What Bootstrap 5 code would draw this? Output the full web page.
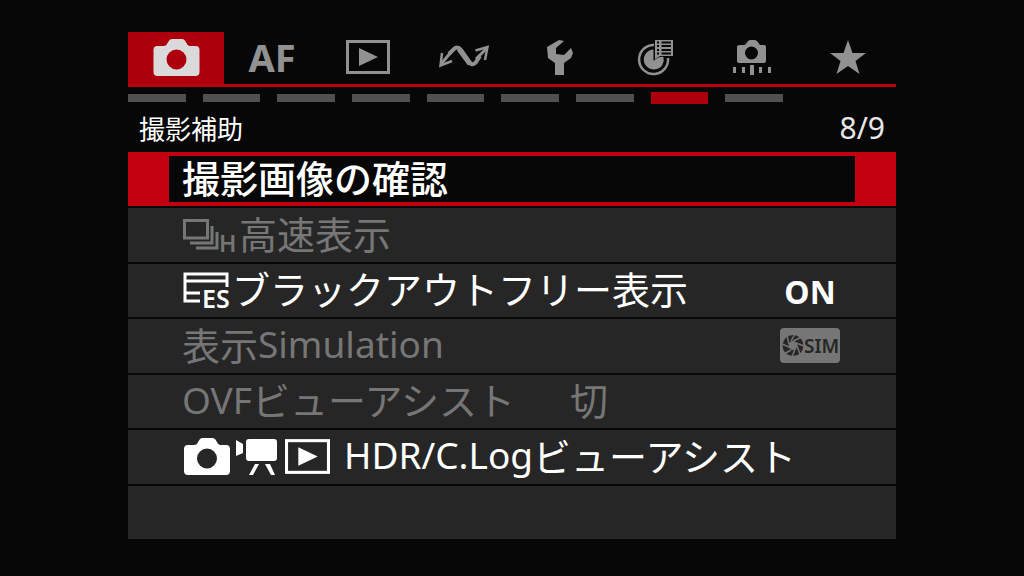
<!DOCTYPE html>
<html lang="ja">
<head>
<meta charset="utf-8">
<meta name="viewport" content="width=device-width, initial-scale=1">
<title>撮影補助</title>
<link href="https://cdn.jsdelivr.net/npm/bootstrap@5.3.0/dist/css/bootstrap.min.css" rel="stylesheet">
<style>
  body { background: #070707; color: #fff; font-family: "Noto Sans CJK JP", sans-serif; }
  .screen { width: 75%; padding: 32px 0 37px; }
  .latin { font-family: "Noto Sans", sans-serif; }
  .menu-tabs { height: 55px; border-bottom: 3px solid #bb0210; }
  .menu-tab { flex: 1 1 0; padding: 0 0 2px; background: transparent; color: #919191; line-height: 1; }
  .menu-tab.active { background: #ae000c; color: #dadada; }
  .tab-text { font-size: 38px; }
  .pages { height: 22px; gap: 17px; padding-right: 113px; }
  .page-bar { flex: 1 1 0; height: 8px; background: #505050; }
  .page-bar.active { height: 12px; background: #ae000c; }
  .heading { height: 43px; padding: 0 11px 6px; }
  .heading h1 { font-size: 26px; line-height: 1; font-weight: 400; }
  .page-count { font-size: 30px; line-height: 1; color: #e8e8e8; }
  .menu-row { flex: 1 1 0; min-height: 54px; padding: 0 41px; color: #fff; background: #262626;
    border: 0 solid #080808; font-size: 38px; line-height: 1; font-weight: 400; text-align: left; white-space: nowrap; }
  .menu-row + .menu-row { border-top-width: 2px; }
  .menu-row:disabled { color: #767676; }
  .menu-row.active { background: #c2000f; font-weight: 500; }
  .row-body { padding: 0 15px 4px 13px; }
  .menu-row.active .row-body { background: #070707; }
  .menu-row .latin { font-size: 37px; }
  .menu-row svg { margin-top: 4px; }
  .row-value { width: 60px; }
  .menu-row .row-value .latin { font-size: 32px; font-weight: 700; }
  .setting { margin-left: 55px; }
  svg { display: block; flex: none; overflow: visible; }
  svg text { font-family: "Noto Sans", sans-serif; }
</style>
</head>
<body>
<svg width="0" height="0" class="position-absolute" aria-hidden="true">
  <defs>
    <symbol id="camera" viewBox="0 0 46 37"><path fill="currentColor" fill-rule="evenodd" d="M4 7H10Q13 7 14 4L16 1Q17 0 19 0H28Q30 0 31 1L33 4Q34 7 36 7H42Q46 7 46 11V33Q46 37 42 37H4Q0 37 0 33V11Q0 7 4 7ZM23 10.500A10 10 0 1 0 23 30.500A10 10 0 1 0 23 10.500Z"/></symbol>
    <symbol id="play" viewBox="0 0 44 34"><rect x="1.500" y="1.500" width="41" height="31" fill="none" stroke="currentColor" stroke-width="3"/><path fill="currentColor" d="M13 8L32 17L13 26Z"/></symbol>
  </defs>
</svg>

<main class="screen mx-auto min-vh-100 d-flex flex-column">
  <nav class="menu-tabs d-flex" aria-label="メニュー">
    <button type="button" class="menu-tab active border-0 d-flex align-items-center justify-content-center" aria-label="撮影">
      <svg width="47" height="37"><use href="#camera"/></svg>
    </button>
    <button type="button" class="menu-tab border-0 d-flex align-items-center justify-content-center"><span class="latin tab-text fw-bold">AF</span></button>
    <button type="button" class="menu-tab border-0 d-flex align-items-center justify-content-center" aria-label="再生">
      <svg width="44" height="34"><use href="#play"/></svg>
    </button>
    <button type="button" class="menu-tab border-0 d-flex align-items-center justify-content-center" aria-label="通信">
      <svg width="50" height="24" viewBox="0 0 50 24" fill="none" stroke="currentColor">
        <path stroke-width="3" d="M2 19L13 6M37 14L48 3"/>
        <path stroke-width="4" d="M10 9L14 5Q18 0 22 5L31 18Q34 21 37 17L41 11"/>
        <path stroke-width="5" d="M20 4L31 19"/>
        <path stroke-width="2.500" d="M3 8L1.500 20.500L13 16M36.500 5.500L48.500 2L46 15"/>
      </svg>
    </button>
    <button type="button" class="menu-tab border-0 d-flex align-items-center justify-content-center" aria-label="設定">
      <svg width="26" height="35" viewBox="0 0 26 35"><path fill="currentColor" d="M12 0L17 1L9 8V14L17 15L24 8L26 13L24 18L17 23V35H8V23L1 18L0 7Z"/></svg>
    </button>
    <button type="button" class="menu-tab border-0 d-flex align-items-center justify-content-center" aria-label="カスタム機能">
      <svg width="36" height="35" viewBox="0 0 36 35">
        <path d="M16 5A14.500 14.500 0 1 0 30 18" fill="none" stroke="currentColor" stroke-width="2.500"/>
        <path d="M15.500 19.500V9.500A10 10 0 1 0 25.500 17Q21 16 15.500 21Z" fill="currentColor"/>
        <path d="M17 0H35V16H22L17 19Z" fill="currentColor"/>
        <path d="M19 2.500H21M23.500 2.500H33M19 6H21M23.500 6H33M19 10H21M23.500 10H33M19 13.500H21M23.500 13.500H33" stroke="#070707" stroke-width="2"/>
      </svg>
    </button>
    <button type="button" class="menu-tab border-0 d-flex align-items-center justify-content-center" aria-label="操作カスタマイズ">
      <svg width="38" height="35" viewBox="0 0 38 35" fill="currentColor">
        <path fill-rule="evenodd" d="M7 5H12L15 1L17 0H22L24 1L27 5H31Q33 5 33 7V21Q33 23 31 23H7Q4 23 4 21V7Q4 5 7 5ZM18.500 6.500A6.500 6.500 0 1 0 18.500 19.500A6.500 6.500 0 1 0 18.500 6.500Z"/>
        <path d="M0 27H3V33H0ZM9 27H12V33H9ZM17 25H21V35H17ZM26 27H29V33H26ZM35 27H38V33H35Z"/>
      </svg>
    </button>
    <button type="button" class="menu-tab border-0 d-flex align-items-center justify-content-center" aria-label="マイメニュー">
      <svg width="36" height="34" viewBox="0 0 36 34"><path fill="currentColor" d="M18 0L22.500 13H36L25.500 21L29.500 34L18 26L6.500 34L10.500 21L0 13H13.500Z"/></svg>
    </button>
  </nav>

  <div class="pages d-flex align-items-center" aria-hidden="true">
    <span class="page-bar"></span><span class="page-bar"></span><span class="page-bar"></span>
    <span class="page-bar"></span><span class="page-bar"></span><span class="page-bar"></span>
    <span class="page-bar"></span><span class="page-bar active"></span><span class="page-bar"></span>
  </div>

  <header class="heading d-flex align-items-center justify-content-between">
    <h1 class="m-0">撮影補助</h1>
    <span class="page-count latin">8/9</span>
  </header>

  <section class="flex-grow-1 d-flex flex-column">
    <button type="button" class="menu-row active d-flex">
      <span class="row-body my-1 flex-grow-1 align-self-stretch d-flex align-items-center">撮影画像の確認</span>
    </button>
    <button type="button" disabled class="menu-row d-flex">
      <span class="row-body flex-grow-1 align-self-stretch d-flex align-items-center">
        <svg width="57" height="38" viewBox="0 0 57 38" aria-hidden="true">
          <path d="M2.500 4.500H25.500V22H2.500ZM30 10V27H8M35 16V32H14" fill="none" stroke="currentColor" stroke-width="3"/>
          <text x="37" y="36" font-size="23" font-weight="600" fill="currentColor">H</text>
        </svg>高速表示</span>
    </button>
    <button type="button" class="menu-row d-flex">
      <span class="row-body flex-grow-1 align-self-stretch d-flex align-items-center">
        <svg width="50" height="38" viewBox="0 0 50 38" aria-hidden="true">
          <path d="M45 16V3H3V30H18M3 10H45M3 22H18" fill="none" stroke="currentColor" stroke-width="3"/>
          <text x="20" y="37" font-size="25" font-weight="600" fill="currentColor">ES</text>
        </svg>ブラックアウトフリー表示
        <span class="row-value ms-auto text-center"><span class="latin">ON</span></span>
      </span>
    </button>
    <button type="button" disabled class="menu-row d-flex">
      <span class="row-body flex-grow-1 align-self-stretch d-flex align-items-center">表示<span class="latin">Simulation</span>
        <span class="row-value ms-auto">
          <svg width="60" height="35" viewBox="0 0 60 35" role="img" aria-label="SIM">
            <rect width="60" height="35" rx="4" fill="#767676"/>
            <circle cx="13" cy="17.500" r="7.500" fill="none" stroke="#262626" stroke-width="6"/>
            <path d="M13 13L22 9M16 15L24 18M17 18L20 26M15 21L12 29M11 22L4 26M9 19L2 16M9 16L7 8M11 13L15 6" stroke="#767676" stroke-width="1.500"/>
            <text x="24" y="25" font-size="19" font-weight="600" fill="#262626">SIM</text>
          </svg>
        </span>
      </span>
    </button>
    <button type="button" disabled class="menu-row d-flex">
      <span class="row-body flex-grow-1 align-self-stretch d-flex align-items-center"><span class="latin">OVF</span>ビューアシスト<span class="setting">切</span></span>
    </button>
    <button type="button" class="menu-row d-flex">
      <span class="row-body flex-grow-1 align-self-stretch d-flex align-items-center">
        <svg width="162" height="37" viewBox="0 0 162 37" aria-hidden="true">
          <use href="#camera" x="2" width="46" height="37"/>
          <path fill="currentColor" d="M54 2L61 6V15L54 18ZM67 1H92Q95 1 95 4V20Q95 23 92 23H67Q64 23 64 20V4Q64 1 67 1ZM73 26H77L71 37H67ZM83 26H88L93 37H89Z"/>
          <use href="#play" x="103" y="1" width="45" height="35"/>
        </svg><span class="latin">HDR/C.Log</span>ビューアシスト</span>
    </button>
    <div class="menu-row"></div>
  </section>
</main>
<script src="https://cdn.jsdelivr.net/npm/bootstrap@5.3.0/dist/js/bootstrap.bundle.min.js"></script>
</body>
</html>
